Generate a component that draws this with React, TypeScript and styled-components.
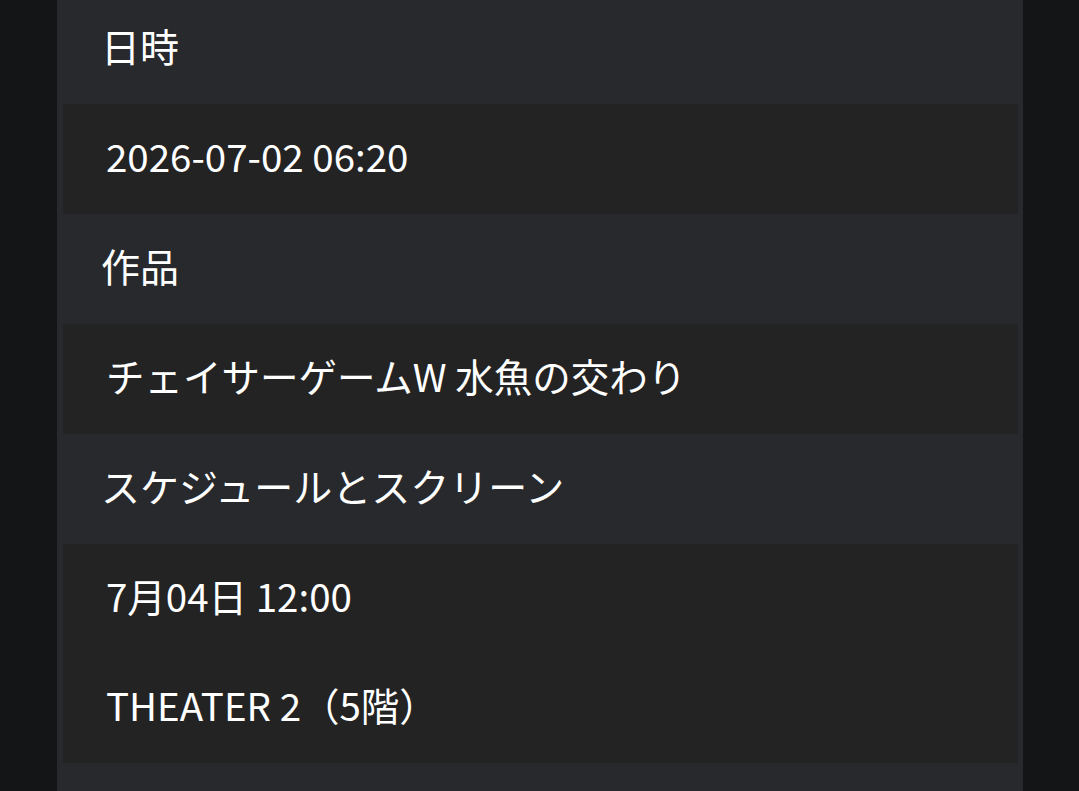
import styled, { createGlobalStyle } from 'styled-components'

type DetailItem = {
  label: string
  values: string[]
}

const items: DetailItem[] = [
  { label: '日時', values: ['2026-07-02 06:20'] },
  { label: '作品', values: ['チェイサーゲームW 水魚の交わり'] },
  { label: 'スケジュールとスクリーン', values: ['7月04日 12:00', 'THEATER 2（5階）'] },
]

const GlobalStyle = createGlobalStyle`
  html, body {
    margin: 0;
    padding: 0;
    background: #141517;
    overflow: hidden;
  }
  body {
    font-family: 'Noto Sans CJK JP', 'Noto Sans', sans-serif;
    color: #ffffff;
  }
`

const App = () => {
  return (
    <>
      <GlobalStyle />
      <Page>
        <Panel>
          {items.map((item) => (
            <Section key={item.label}>
              <Label>{item.label}</Label>
              <ValueBox>
                {item.values.map((v) => (
                  <ValueLine key={v}>{v}</ValueLine>
                ))}
              </ValueBox>
            </Section>
          ))}
          <Spacer />
        </Panel>
      </Page>
    </>
  )
}

const Page = styled.div`
  display: flex;
  min-height: 100vh;
  padding: 0 56px 0 57px;
  box-sizing: border-box;
`
const Panel = styled.section`
  flex: 1;
  display: flex;
  flex-direction: column;
  background: #28292c;
  margin-top: -6.5px;
`
const Section = styled.div`
  display: flex;
  flex-direction: column;
`
const Label = styled.div`
  height: 110.5px;
  box-sizing: border-box;
  display: flex;
  align-items: center;
  padding: 0 0 8px 44px;
  font-size: 39px;
`
const ValueBox = styled.div`
  margin: 0 5px 0 6px;
  background: #232323;
  display: flex;
  flex-direction: column;
`
const ValueLine = styled.div`
  height: 109.5px;
  box-sizing: border-box;
  display: flex;
  align-items: center;
  padding: 0 0 8px 43px;
  font-size: 38.5px;
`
const Spacer = styled.div`
  height: 60px;
`

export default App
